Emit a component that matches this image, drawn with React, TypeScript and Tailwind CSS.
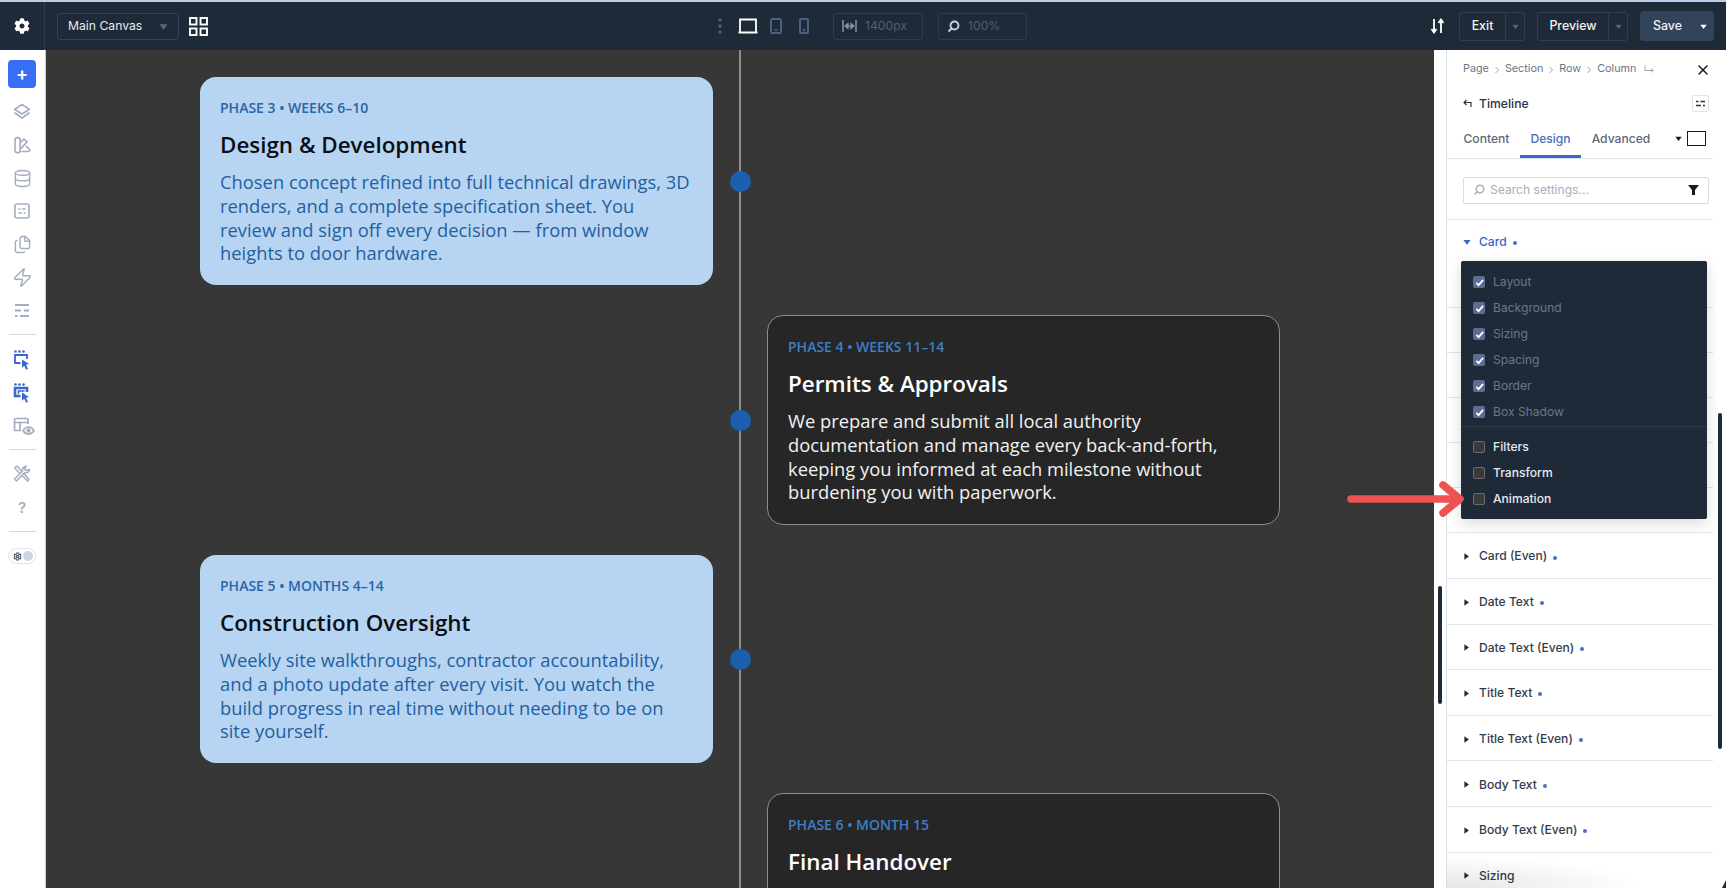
import React from "react";
import { Settings, Database, Zap, Files, X } from "lucide-react";
import { FaCog } from "react-icons/fa";

const Caret = ({ cls, dir = "down" }: { cls: string; dir?: "down" | "right" }) => (
  <svg viewBox="0 0 10 10" className={cls} fill="currentColor">
    {dir === "down" ? <path d="M0.5 2.5h9L5 8.5z" /> : <path d="M2 0.5v9l6.5-4.5z" />}
  </svg>
);

const sideStroke = "#a3acc0";
const Icon = ({ children, color = sideStroke, size = 20 }: { children: React.ReactNode; color?: string; size?: number }) => (
  <svg width={size} height={size} viewBox="0 0 20 20" fill="none" stroke={color} strokeWidth="1.6" strokeLinejoin="round" strokeLinecap="round">
    {children}
  </svg>
);

const LayersI = () => (
  <Icon>
    <path d="M10 2.5l7.5 4.8L10 12 2.5 7.3z" />
    <path d="M3 11l7 5 7-5" />
  </Icon>
);
const ThemeI = () => (
  <Icon>
    <path d="M3 5.2a2.6 2.6 0 015.2 0v10a2.6 2.6 0 01-5.2 0z" />
    <path d="M8.4 7.5l3.6-3.4 3 2.8-5.5 6" />
    <path d="M10 16.5h6.5a1.3 1.3 0 001-2.1l-3-3" />
  </Icon>
);
const FormI = () => (
  <Icon>
    <rect x="3" y="3" width="14" height="14" rx="2" />
    <path d="M7 8h.8M10.6 8h2.4M7 12h2.4M12.2 12h.8" />
  </Icon>
);
const RowsI = () => (
  <Icon>
    <path d="M3 4h14M3 9.5h6M12 9.5h5M3 15h2.6M8 15h9" strokeWidth="2.2" strokeLinecap="butt" />
  </Icon>
);
const ToolsI = () => (
  <Icon>
    <path d="M3.500 3l1.800-.8L17 15.500 15.500 17 3 4.500z" strokeWidth="1.500" />
    <path d="M17.500 5.500a3.800 3.800 0 01-5 3.300L4.500 17l-2-2 8-7.800a3.800 3.800 0 013.900-4.900l-2 2.300 2 2z" strokeWidth="1.500" fill="#fff" />
  </Icon>
);
const BlueWin = ({ outer }: { outer?: boolean }) => (
  <svg width="20" height="22" viewBox="0 0 20 22" fill="#3b66cf">
    <circle cx="3.5" cy="2.5" r="1.3" />
    <circle cx="7.5" cy="2.5" r="1.3" />
    <circle cx="11.5" cy="2.5" r="1.3" />
    <path d="M8.5 14H3V6h12v4" fill="none" stroke="#3b66cf" strokeWidth={outer ? 2.6 : 1.8} />
    {outer && <path d="M6.5 12V9h6" fill="none" stroke="#3b66cf" strokeWidth="1.5" />}
    <path d="M10 10.5l7 4.5-3 .8 2 4-1.8.9-2-4-2.2 2z" />
  </svg>
);
const ThemeEye = () => (
  <svg width="24" height="22" viewBox="0 0 24 22" fill="none" stroke={sideStroke} strokeWidth="1.7">
    <path d="M9 14.5H3.5a1 1 0 01-1-1V3.500a1 1 0 011-1H15a1 1 0 011 1V8" />
    <path d="M2.500 6.500H16M8 6.500v8" />
    <path d="M11 14.500c1.500-2.500 3.500-3.500 5.500-3.500s4 1 5.500 3.500c-1.500 2.500-3.500 3.500-5.500 3.500s-4-1-5.500-3.500z" />
    <circle cx="16.500" cy="14.500" r="1.300" fill={sideStroke} />
  </svg>
);

const TopBox = ({ icon, label, w }: { icon: React.ReactNode; label: string; w: string }) => (
  <div className={`flex h-[27px] items-center gap-[8px] rounded-[3px] border border-[#2f3c4f] pl-[8px] text-[12.2px] text-[#515e74] ${w}`}>
    {icon}
    <span className="pt-px">{label}</span>
  </div>
);

const SplitBtn = ({ label, w, textW }: { label: string; w: string; textW: string }) => (
  <div className={`flex h-[29px] items-stretch rounded-[3px] border border-[#313e51] text-[12.4px] font-medium text-[#f1f3f6] ${w}`}>
    <div className={`flex items-center justify-center border-r border-[#313e51] pt-px ${textW}`}>{label}</div>
    <div className="flex flex-1 items-center justify-center text-[#56637a]">
      <Caret cls="h-[7px] w-[7px]" />
    </div>
  </div>
);

const Dot = () => <span className="ml-[6px] mt-[2px] inline-block h-[4px] w-[4px] rounded-full bg-[#4a6fc9]" />;

const Sep = () => (
  <svg width="6" height="8" viewBox="0 0 6 8" fill="none" stroke="#9aa3b2" strokeWidth="1" className="mx-[5px]">
    <path d="M1.500 1l3 3-3 3" />
  </svg>
);

const Section = ({ label, dot = true, h = "h-[45.6px]" }: { label: string; dot?: boolean; h?: string }) => (
  <div className={`flex items-center border-b border-[#dfe3ea] pl-[16px] pt-[2px] text-[12.1px] font-medium text-[#333c4b] ${h}`}>
    <Caret cls="mr-[9px] h-[7px] w-[7px] text-[#222a36]" dir="right" />
    <span>{label}</span>
    {dot && <Dot />}
  </div>
);

const Check = ({ on, label }: { on: boolean; label: string }) => (
  <div className={`flex h-[26px] items-center gap-[8px] pl-[12px] text-[12.1px] ${on ? "text-[#6d7686]" : "font-medium text-[#e6e9ee]"}`}>
    {on ? (
      <span className="flex h-[12px] w-[12px] items-center justify-center rounded-[2px] bg-[#5d6c95]">
        <svg width="9" height="9" viewBox="0 0 10 10" fill="none" stroke="#fff" strokeWidth="2">
          <path d="M1.500 5.500l2.500 2.500 5-6" />
        </svg>
      </span>
    ) : (
      <span className="h-[12px] w-[12px] rounded-[2px] border border-[#6b6b6b] bg-[#3a3a3a]" />
    )}
    <span>{label}</span>
  </div>
);

const Card = ({ tone, phase, title, body }: { tone: "light" | "dark"; phase: string; title: string; body: string[] }) => {
  const light = tone === "light";
  return (
    <div
      className={`w-[513px] rounded-[16px] pt-[21px] font-['Open_Sans',sans-serif] ${
        light ? "h-[208px] bg-[#b7d5f3] px-[20px] text-[#23609f]" : "h-[210px] border border-[#8c8c8c] bg-[#262626] px-[20px] text-[#f2f2f2]"
      }`}
    >
      <div className={`text-[14px] font-semibold leading-[20px] ${light ? "text-[#2a65a5]" : "text-[#3f7ec2]"}`}>{phase}</div>
      <div className={`mt-[10px] text-[22.4px] font-semibold leading-[34px] ${light ? "text-[#0b0f14]" : "text-white"}`}>{title}</div>
      <div className="mt-[8px] text-[18.35px] leading-[23.8px]">
        {body.map((l) => (
          <div key={l} className="whitespace-nowrap">{l}</div>
        ))}
      </div>
    </div>
  );
};

const Row = ({ side, card }: { side: "left" | "right"; card: React.ReactNode }) => (
  <div className="flex h-[208px] shrink-0 items-center">
    <div className="w-[513px]">{side === "left" && card}</div>
    <div className="relative z-10 flex w-[54px] justify-center">
      <span className="h-[21px] w-[21px] rounded-full bg-[#1b5fae]" />
    </div>
    <div className="w-[513px]">{side === "right" && card}</div>
  </div>
);

export default function App() {
  return (
    <div className="flex h-[888px] w-[1726px] flex-col overflow-hidden bg-white font-['Inter',sans-serif]">
      {/* Top bar */}
      <header className="flex h-[50px] shrink-0 items-center border-t-2 border-[#b9cde6] bg-[#1f2a38] pr-[12px]">
        <div className="flex h-full w-[45px] shrink-0 items-center justify-center border-r border-[#303c4d] text-white">
          <FaCog size={16} />
        </div>
        <div className="ml-[12px] flex h-[27px] w-[122px] items-center justify-between rounded-[3px] border border-[#33425a] pl-[10px] pr-[10px] text-[12.2px] text-[#e8ebf0]">
          <span className="pt-px">Main Canvas</span>
          <Caret cls="h-[9px] w-[9px] text-[#5a6880]" />
        </div>
        <svg width="19" height="19" viewBox="0 0 19 19" fill="none" stroke="#fff" strokeWidth="1.900" className="ml-[10px]">
          <rect x="1" y="1" width="6.500" height="6.500" />
          <rect x="11.500" y="1" width="6.500" height="6.500" />
          <rect x="1" y="11.500" width="6.500" height="6.500" />
          <rect x="11.500" y="11.500" width="6.500" height="6.500" />
        </svg>
        <div className="ml-[510px] flex items-center">
          <svg width="4" height="16" viewBox="0 0 4 16" fill="#4f5d75">
            <circle cx="2" cy="2" r="1.700" />
            <circle cx="2" cy="8" r="1.700" />
            <circle cx="2" cy="14" r="1.700" />
          </svg>
          <svg width="20" height="16" viewBox="0 0 20 16" fill="none" stroke="#fff" strokeWidth="1.800" className="ml-[16px]">
            <path d="M2 14.500V1.500h16v13M0.500 14.500h19" />
          </svg>
          <svg width="12" height="16" viewBox="0 0 12 16" fill="none" stroke="#4c5f85" strokeWidth="2" className="ml-[12px]">
            <rect x="1" y="1" width="10" height="14" rx="1" />
            <circle cx="6" cy="12" r="0.500" />
          </svg>
          <svg width="10" height="16" viewBox="0 0 10 16" fill="none" stroke="#4c5f85" strokeWidth="2" className="ml-[17px]">
            <rect x="1" y="1" width="8" height="14" rx="1" />
            <circle cx="5" cy="12" r="0.500" />
          </svg>
        </div>
        <div className="ml-[24px] flex gap-[15px]">
          <TopBox
            w="w-[90px]"
            label="1400px"
            icon={
              <svg width="15" height="14" viewBox="0 0 15 14" fill="#8692a8" stroke="#8692a8" strokeWidth="1.200">
                <path d="M1 1v12M14 1v12" fill="none" strokeWidth="1.500" />
                <path d="M3 7l3-2.500v5zM12 7l-3-2.500v5z" />
                <path d="M6 7h3" />
              </svg>
            }
          />
          <TopBox
            w="w-[89px]"
            label="100%"
            icon={
              <svg width="13" height="13" viewBox="0 0 13 13" fill="none" stroke="#c9d0db" strokeWidth="1.900">
                <circle cx="7.500" cy="5.500" r="4" />
                <path d="M4.500 8.500L1.500 11.500" />
              </svg>
            }
          />
        </div>
        <div className="ml-auto flex items-center">
          <svg width="15" height="16" viewBox="0 0 15 16" fill="none" stroke="#fff" strokeWidth="1.800" className="mr-[14px]">
            <path d="M4 1v13M1.500 11L4 14.500 6.500 11M11 15V2M8.500 5L11 1.500 13.500 5" />
          </svg>
          <SplitBtn label="Exit" w="w-[66px]" textW="w-[46px]" />
          <div className="ml-[12px]">
            <SplitBtn label="Preview" w="w-[91px]" textW="w-[71px]" />
          </div>
          <div className="ml-[12px] flex h-[30px] w-[74px] items-center justify-between rounded-[4px] bg-[#33445a] pl-[13px] pr-[7px] text-[12.4px] font-medium text-[#f1f3f6]">
            <span className="pt-px">Save</span>
            <Caret cls="h-[7px] w-[7px] text-white" />
          </div>
        </div>
      </header>

      <div className="flex min-h-0 flex-1">
        {/* Left rail */}
        <aside className="flex w-[46px] shrink-0 flex-col items-center border-r border-[#c9ced8] bg-white pr-px pt-[10px]">
          <div className="flex h-[28px] w-[28px] items-center justify-center rounded-[4px] bg-[#3a6df6] text-[18px] font-semibold leading-none text-white">+</div>
          <div className="mt-[14px] flex h-[20px] items-center"><LayersI /></div>
          <div className="mt-[13px] flex h-[20px] items-center"><ThemeI /></div>
          <div className="mt-[13px] flex h-[20px] items-center"><Database size={19} color={sideStroke} strokeWidth={1.800} /></div>
          <div className="mt-[13px] flex h-[20px] items-center"><FormI /></div>
          <div className="mt-[13px] flex h-[20px] items-center"><Files size={19} color={sideStroke} strokeWidth={1.800} /></div>
          <div className="mt-[13px] flex h-[20px] items-center"><Zap size={21} color={sideStroke} strokeWidth={1.600} /></div>
          <div className="mt-[14px] flex h-[20px] items-center"><RowsI /></div>
          <div className="mt-[13px] h-px w-[27px] bg-[#d5d9e1]" />
          <div className="mt-[14px] flex h-[22px] items-center"><BlueWin /></div>
          <div className="mt-[11px] flex h-[22px] items-center"><BlueWin outer /></div>
          <div className="ml-[4px] mt-[12px] flex h-[22px] items-center"><ThemeEye /></div>
          <div className="mt-[11px] h-px w-[27px] bg-[#d5d9e1]" />
          <div className="mt-[14px] flex h-[20px] items-center"><ToolsI /></div>
          <div className="mt-[14px] flex h-[20px] items-center text-[15px] font-semibold text-[#a3acc0]">?</div>
          <div className="mt-[13px] h-px w-[27px] bg-[#d5d9e1]" />
          <div className="mt-[16px] flex h-[16px] w-[28px] items-center justify-between rounded-full border border-[#dfe3ea] pl-[4px] pr-[2px]">
            <Settings size={9} color="#46556f" strokeWidth={3} />
            <span className="h-[10px] w-[10px] rounded-full bg-[#cfd6e2]" />
          </div>
        </aside>

        {/* Canvas */}
        <main className="relative w-[1388px] shrink-0 overflow-hidden bg-[#373737] pl-[154px] pt-[27px]">
          <div className="absolute bottom-0 left-[693px] top-0 w-[2px] bg-[#8e8e8e]" />
          <div className="flex flex-col gap-[31px]">
            <Row
              side="left"
              card={
                <Card
                  tone="light"
                  phase="PHASE 3 • WEEKS 6–10"
                  title="Design & Development"
                  body={[
                    "Chosen concept refined into full technical drawings, 3D",
                    "renders, and a complete specification sheet. You",
                    "review and sign off every decision — from window",
                    "heights to door hardware.",
                  ]}
                />
              }
            />
            <Row
              side="right"
              card={
                <Card
                  tone="dark"
                  phase="PHASE 4 • WEEKS 11–14"
                  title="Permits & Approvals"
                  body={[
                    "We prepare and submit all local authority",
                    "documentation and manage every back-and-forth,",
                    "keeping you informed at each milestone without",
                    "burdening you with paperwork.",
                  ]}
                />
              }
            />
            <Row
              side="left"
              card={
                <Card
                  tone="light"
                  phase="PHASE 5 • MONTHS 4–14"
                  title="Construction Oversight"
                  body={[
                    "Weekly site walkthroughs, contractor accountability,",
                    "and a photo update after every visit. You watch the",
                    "build progress in real time without needing to be on",
                    "site yourself.",
                  ]}
                />
              }
            />
            <Row side="right" card={<Card tone="dark" phase="PHASE 6 • MONTH 15" title="Final Handover" body={[]} />} />
          </div>
        </main>

        {/* Settings panel */}
        <aside className="relative flex min-w-0 flex-1 bg-white">
          <div className="flex w-[13px] shrink-0 items-start justify-start border-r border-[#d9deea] pl-[4px] pt-[536px]">
            <div className="h-[118px] w-[4px] rounded-full bg-[#1f2a38]" />
          </div>
          <div className="relative min-w-0 flex-1 pr-[13px]">
            <div className="flex h-[37px] items-center pl-[16px] pr-[4px] pt-[2px] text-[10.8px] text-[#6b7488]">
              <span>Page</span>
              <Sep />
              <span>Section</span>
              <Sep />
              <span>Row</span>
              <Sep />
              <span>Column</span>
              <svg width="10" height="9" viewBox="0 0 10 9" fill="none" stroke="#9aa3b2" strokeWidth="1" className="ml-[8px]">
                <path d="M1 0.500v5h8M7 3.500l2 2-2 2" />
              </svg>
              <X size={16} color="#141a24" strokeWidth={2.200} className="ml-auto mr-[-2px]" />
            </div>
            <div className="flex h-[33px] items-center pl-[16px] pr-[4px] text-[12.2px] font-medium text-[#2a3342]">
              <svg width="9" height="9" viewBox="0 0 9 9" fill="none" stroke="#2a3342" strokeWidth="1.200" className="mr-[7px]">
                <path d="M8 8V3.500H1.500M3.500 1L1 3.500 3.500 6" />
              </svg>
              <span className="pt-px">Timeline</span>
              <div className="ml-auto flex h-[17px] w-[17px] items-center justify-center rounded-[2px] border border-[#dfe3ea]">
                <svg width="9" height="7" viewBox="0 0 9 7" stroke="#2a3342" strokeWidth="1.500">
                  <path d="M0 1.500h2.500M4.500 1.500H9M0 5.500h5M7 5.500h2" />
                </svg>
              </div>
            </div>
            <div className="flex h-[39px] items-stretch border-b border-[#dfe3ea] pl-[6px] text-[12.1px] font-medium text-[#5d6678]">
              <div className="flex items-center px-[10.500px]">Content</div>
              <div className="flex items-center border-b-[3px] border-[#3b66cf] px-[10.500px] pt-[3px] text-[#4a6bc0]">Design</div>
              <div className="flex items-center px-[10.500px]">Advanced</div>
              <div className="ml-auto flex items-center pb-[1px]">
                <Caret cls="mr-[5px] h-[7px] w-[7px] text-[#141a24]" />
                <span className="mr-[7px] block h-[15px] w-[19px] border-[1.500px] border-[#141a24]" />
              </div>
            </div>
            <div className="flex h-[61px] items-center border-b border-[#dfe3ea] pl-[16px] pr-[4px] pt-[2px]">
              <div className="flex h-[27px] w-full items-center rounded-[2px] border border-[#d8dce4] pl-[9px] pr-[9px] text-[12.100px] text-[#a8aeba]">
                <svg width="12" height="12" viewBox="0 0 12 12" fill="none" stroke="#a8aeba" strokeWidth="1.500" className="mr-[5px]">
                  <circle cx="7" cy="5" r="3.800" />
                  <path d="M4.200 7.800L1.500 10.500" />
                </svg>
                <span>Search settings...</span>
                <svg width="11" height="10" viewBox="0 0 11 10" fill="#141a24" className="ml-auto">
                  <path d="M0 0h11L7 5v5H4V5z" />
                </svg>
              </div>
            </div>
            <div className="h-[88px] border-b border-[#dfe3ea] pl-[16px] pt-[13px] text-[12.100px] font-medium text-[#3b64c8]">
              <div className="flex h-[18px] items-center">
                <Caret cls="mr-[8px] h-[8px] w-[8px]" />
                <span>Card</span>
                <Dot />
              </div>
            </div>
            <Section label="" dot={false} h="h-[45px]" />
            <Section label="" dot={false} h="h-[45px]" />
            <Section label="" dot={false} h="h-[45px]" />
            <Section label="" dot={false} h="h-[45px]" />
            <Section label="" dot={false} h="h-[45px]" />
            <Section label="Card (Even)" h="h-[46px]" />
            <Section label="Date Text" />
            <Section label="Date Text (Even)" />
            <Section label="Title Text" />
            <Section label="Title Text (Even)" />
            <Section label="Body Text" />
            <Section label="Body Text (Even)" />
            <Section label="Sizing" dot={false} />

            {/* Popup menu */}
            <div className="absolute left-[14px] top-[211px] w-[246px] rounded-[2px] bg-[#1f2a38] pt-[8px] shadow-[0_4px_14px_rgba(0,0,0,0.15)]">
              <Check on label="Layout" />
              <Check on label="Background" />
              <Check on label="Sizing" />
              <Check on label="Spacing" />
              <Check on label="Border" />
              <Check on label="Box Shadow" />
              <div className="mb-[7px] mt-[1px] h-px bg-[#2e3a4b]" />
              <Check on={false} label="Filters" />
              <Check on={false} label="Transform" />
              <Check on={false} label="Animation" />
              <div className="h-[7px]" />
            </div>
            {/* Fade at the bottom of the panel */}
            <div className="pointer-events-none absolute bottom-0 left-0 h-[32px] w-[200px] bg-[radial-gradient(ellipse_at_bottom_left,rgba(0,0,0,0.1),transparent_70%)]" />
          </div>
          {/* Panel scrollbar */}
          <div className="absolute right-[4px] top-[363px] h-[336px] w-[4px] rounded-full bg-[#1f2a38]" />
          {/* Window corner */}
          <svg width="4" height="8" viewBox="0 0 4 8" fill="#1f2a38" className="absolute bottom-0 right-0">
            <path d="M4 0v8H0z" />
          </svg>
          {/* Annotation arrow */}
          <svg width="118" height="36" viewBox="0 0 118 36" fill="none" stroke="#ee5253" strokeWidth="7.500" strokeLinecap="round" strokeLinejoin="round" className="absolute left-[-87px] top-[431px]">
            <path d="M4 18h108M96 4l17 14-17 14" />
          </svg>
        </aside>
      </div>
    </div>
  );
}
